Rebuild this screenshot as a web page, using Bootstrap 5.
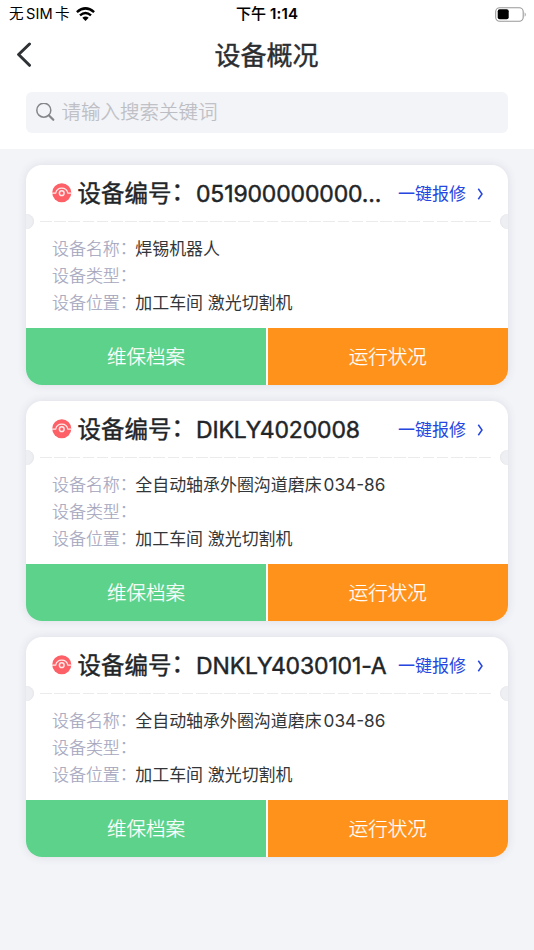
<!DOCTYPE html>
<html lang="zh-CN">
<head>
<meta charset="utf-8">
<meta name="viewport" content="width=device-width, initial-scale=1">
<title>设备概况</title>
<link href="https://cdn.jsdelivr.net/npm/bootstrap@5.3.0/dist/css/bootstrap.min.css" rel="stylesheet">
<style>
body{font-family:Inter,"Noto Sans CJK SC",sans-serif;background:#f3f4f8;color:#2b2e31;min-height:950px;overflow-x:hidden}
svg{display:block;flex:none}
.topbar{height:148.5px}
.status{height:28px;color:#000;font-size:14.6px;line-height:28px;display:grid;grid-template-columns:1fr auto 1fr;padding:0 7px 0 9px}
.carrier{gap:2.5px}
.clock{font-weight:500;-webkit-text-stroke:.1px #000;font-size:15px;margin-right:2px}
.hour{font-weight:600;letter-spacing:.15px}
.titlebar{height:54px;padding:0 16px;display:grid;grid-template-columns:1fr auto 1fr}
.titlebar h1{font-size:26px;line-height:56px;font-weight:400;-webkit-text-stroke:.4px #2b2e31;height:54px;margin:0 1px 0 0}
.searchbox{margin:9.5px 26px 0;height:41px;border-radius:6px;background:#f3f4f8;color:#bcbdc3;font-size:19.5px;line-height:43px;padding-left:10px;font-weight:300;-webkit-text-stroke:.25px #bcbdc3}
.hint{margin-left:6.5px}
.devices{padding:16.5px 26px;gap:16px}
.device{height:220px;border-radius:16px;background:#fff;box-shadow:0 0 10px rgba(60,65,90,.12)}
.device-head{height:56px;padding:0 24px 0 26px}
.device-no{font-size:23.5px;line-height:56px;-webkit-text-stroke:.4px #222527;color:#222527;margin-left:6px;padding-top:2px}
.code{-webkit-text-stroke:.45px #222527;font-size:23px;letter-spacing:-.15px;margin-left:1px}
.colon{position:relative;top:-2px}
.report{font-size:17px;color:#2546e0;line-height:56px;padding-top:1px}
.chev{margin-left:11px}
.perforation{height:1.4px;margin:0 17px 0 13.5px;background:repeating-linear-gradient(90deg,#ebebed 0 11.7px,transparent 11.7px 14.17px)}
.notch{width:8px;height:15.4px;top:48.8px;background:#eeeff3}
.notch-l{left:0;border-radius:0 8px 8px 0;box-shadow:inset -1px 0 1px #e6e7eb}
.notch-r{right:0;border-radius:8px 0 0 8px;box-shadow:inset 1px 0 1px #e6e7eb}
.info{height:106px;padding:14px 26px 0;font-size:16.95px;line-height:26.6px;color:#333638}
.info dt{width:83.3px;font-weight:300;color:#a4a5bd;height:26.6px;white-space:nowrap;-webkit-text-stroke:.2px #a4a5bd}
.info .colon{top:-1px}
.info dd{margin:0;white-space:nowrap}
.num{font-size:17.2px;margin-left:2px}
.actions{gap:1.5px;border-radius:0 0 16px 16px}
.action{flex:1 1 0;border:0;border-radius:0;color:#fff;font-size:19.5px;font-weight:300;padding:1px 0 0;line-height:56px;-webkit-text-stroke:.25px #fff}
.archive{background:#5cd28b}.running{background:#ff921b}
</style>
</head>
<body>
<header class="topbar bg-white">
  <div class="status">
    <div class="carrier d-flex align-items-center"><span>无</span><span>SIM</span><span>卡</span>
      <svg style="margin-left:4px" width="19" height="14" viewBox="0 0 19 14" fill="none" stroke="#000" stroke-width="2.5"><path d="M.9 5.1Q9.5-2.3 18.1 5.1M4 8.4Q9.5 3.7 15 8.4"/><path d="M6.3 10.8Q9.5 8.1 12.7 10.8L9.5 14Z" fill="#000" stroke="none"/></svg>
    </div>
    <div class="clock">下午 <span class="hour">1:14</span></div>
    <div class="d-flex align-items-center justify-content-end">
      <svg width="32" height="15" viewBox="0 0 32 15"><rect x=".7" y=".7" width="27.5" height="13.6" rx="4" fill="none" stroke="#999" stroke-width="1.1"/><rect x="2.7" y="2.2" width="11" height="10" rx="2" fill="#000"/><path d="M29.7 5.2Q31.8 7.5 29.7 9.8Z" fill="#999"/></svg>
    </div>
  </div>
  <div class="titlebar">
    <svg class="align-self-center" width="16" height="26" viewBox="0 0 16 26" fill="none" stroke="#2f3235" stroke-width="3" stroke-linecap="round" stroke-linejoin="round"><path d="M13.5 2 2.6 12.5 13.5 23.3"/></svg>
    <h1>设备概况</h1>
  </div>
  <div class="searchbox d-flex align-items-center">
    <svg width="19" height="19" viewBox="0 0 19 19" fill="none" stroke="#85868a"><circle cx="7.8" cy="7.2" r="7" stroke-width="1.5"/><path d="m13 12.4 4.3 4.4" stroke-width="2.2" stroke-linecap="round"/></svg>
    <span class="hint">请输入搜索关键词</span>
  </div>
</header>

<main class="devices d-flex flex-column" id="devices"></main>

<template id="deviceTpl">
  <article class="device position-relative d-flex flex-column">
    <i class="notch notch-l position-absolute"></i><i class="notch notch-r position-absolute"></i>
    <div class="device-head d-flex align-items-center text-nowrap">
      <svg width="19.5" height="19.5" viewBox="0 0 20 20"><circle cx="10" cy="10" r="9.8" fill="#fd6066"/><g fill="none" stroke="#ffe9e9" stroke-width="1.2"><path d="M0 10.4H3.8A6.3 6.3 0 0 1 16.2 10.4H20"/><circle cx="10" cy="10.4" r="2.4" stroke-width="1.5"/></g></svg>
      <div class="device-no">设备编号<span class="colon">：</span><span class="code"></span></div>
      <a class="report ms-auto d-flex align-items-center text-decoration-none" href="#">一键报修
        <svg class="chev" width="7" height="12" viewBox="0 0 7 12" fill="none" stroke="#2546e0" stroke-width="1.5"><path d="M1.3.8 5 6 1.3 11.2"/></svg></a>
    </div>
    <div class="perforation"></div>
    <dl class="info m-0">
      <div class="d-flex"><dt>设备名称<span class="colon">：</span></dt><dd class="name"></dd></div>
      <div class="d-flex"><dt>设备类型<span class="colon">：</span></dt><dd></dd></div>
      <div class="d-flex"><dt>设备位置<span class="colon">：</span></dt><dd>加工车间 激光切割机</dd></div>
    </dl>
    <div class="actions d-flex flex-fill overflow-hidden">
      <button class="btn action archive">维保档案</button><button class="btn action running">运行状况</button>
    </div>
  </article>
</template>
<script src="https://cdn.jsdelivr.net/npm/bootstrap@5.3.0/dist/js/bootstrap.bundle.min.js"></script>
<script>
const tpl = document.getElementById('deviceTpl');
[['051900000000...', '焊锡机器人', ''],
 ['DIKLY4020008', '全自动轴承外圈沟道磨床', '034-86'],
 ['DNKLY4030101-A', '全自动轴承外圈沟道磨床', '034-86']].forEach(([code, name, num]) => {
  const n = tpl.content.cloneNode(true);
  n.querySelector('.code').textContent = code;
  const d = n.querySelector('.name');
  d.textContent = name;
  if (num) { const s = document.createElement('span'); s.className = 'num'; s.textContent = num; d.append(s); }
  document.getElementById('devices').append(n);
});
</script>
</body>
</html>
